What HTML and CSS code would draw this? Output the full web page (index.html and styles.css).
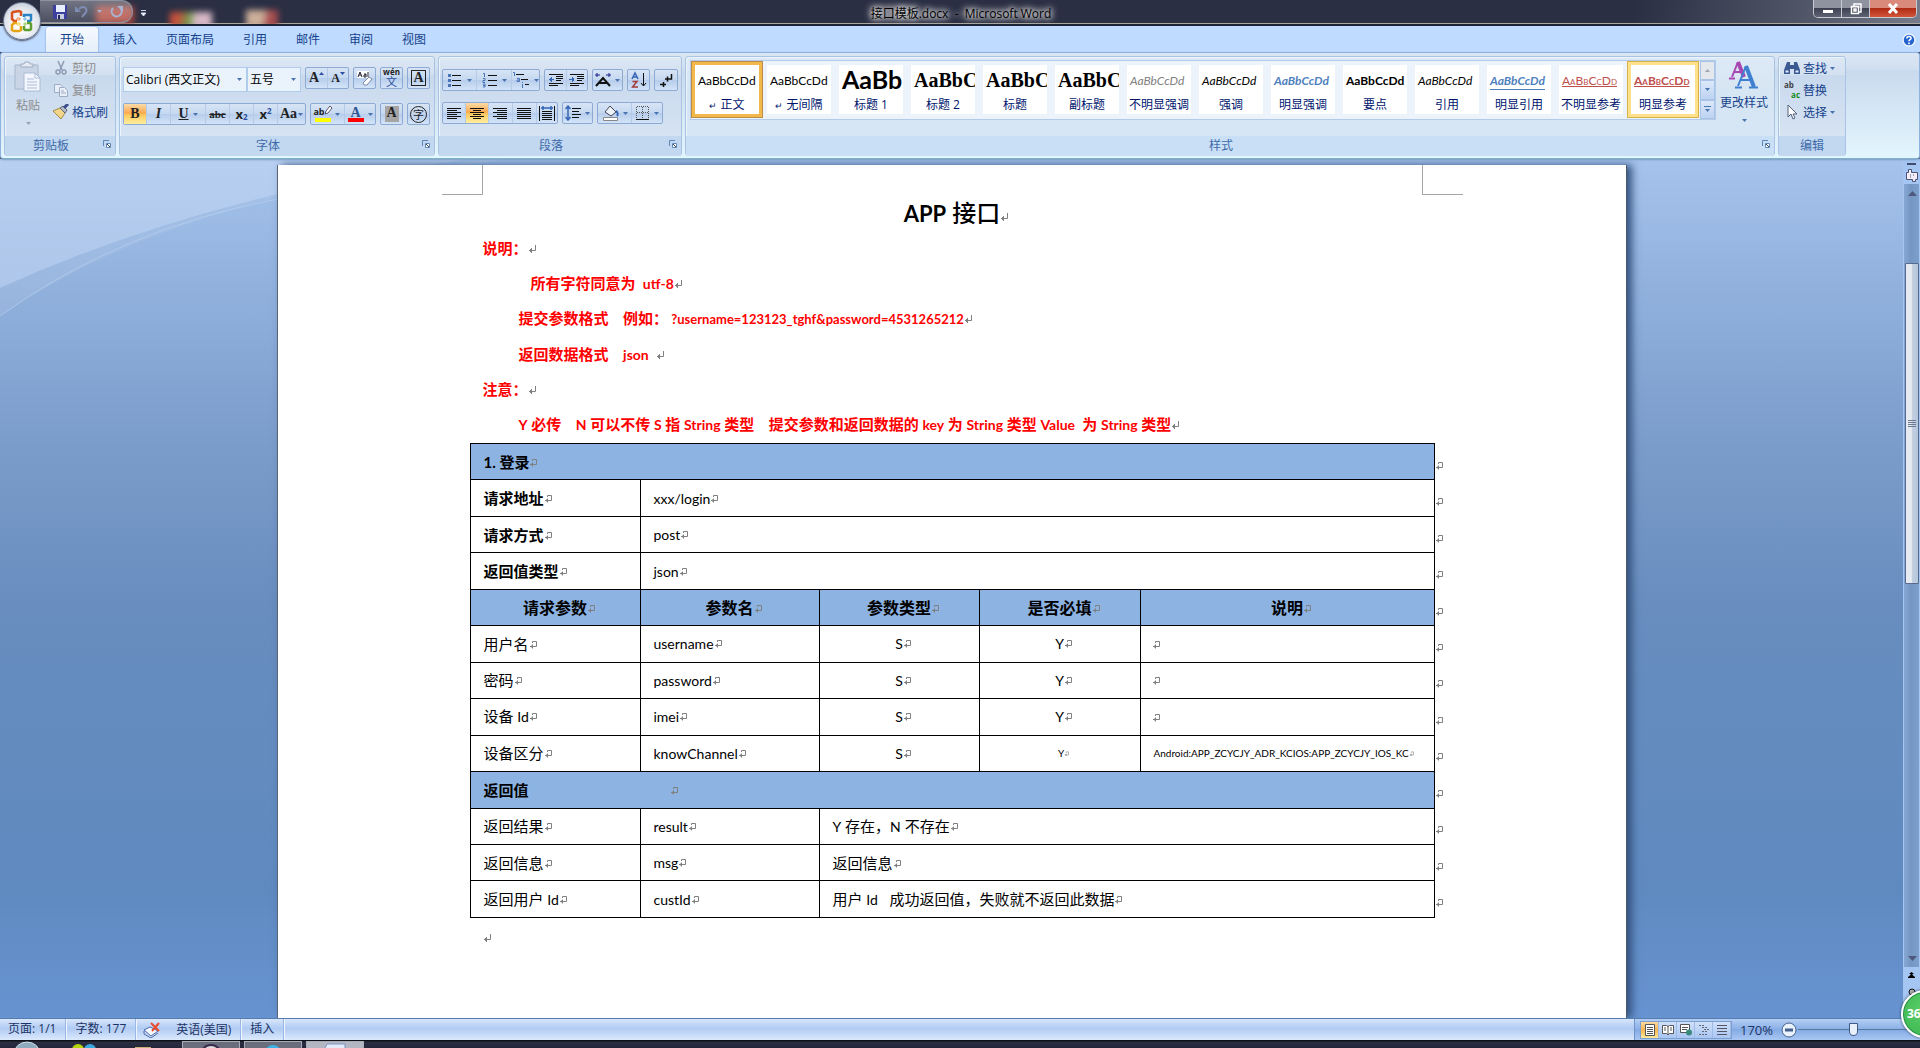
FILE: index.html
```html
<!DOCTYPE html>
<html lang="zh-CN">
<head>
<meta charset="utf-8">
<title>接口模板.docx - Microsoft Word</title>
<link rel="stylesheet" href="styles.css">
</head>
<body>
<svg class="defs" aria-hidden="true">
  <symbol id="para" viewBox="0 0 8 10"><path d="M7.5 1v5.5H1M3.5 4v5M2.500 5v3" fill="none" stroke="#808080"/></symbol>
  <symbol id="cell" viewBox="0 0 8 10"><path d="M3.500 3V1.500H7.500V6.500H1M3.500 4.500v4M2.500 5.500v2" fill="none" stroke="#808080"/></symbol>
  <symbol id="down" viewBox="0 0 5 3"><path d="M0 0h5L2.500 3z" fill="currentColor"/></symbol>
  <symbol id="launch" viewBox="0 0 8 8"><path d="M.5 6V.5H6" fill="none" stroke="#5f86b8"/><path d="M3.500 3.500h4v4h-4z" fill="#fff" stroke="#5f86b8"/><path d="M4 4l3 3" stroke="#345"/></symbol>
</svg>

<div class="app">
  <header class="titlebar">
    <span class="glow glow-a"></span><span class="glow glow-b"></span><span class="glow glow-c"></span>
    <div class="quick">
      <button class="plain" aria-label="保存"><svg width="14" height="14" viewBox="0 0 14 14"><path d="M0 0h14v14H1L0 13z" fill="#3b3fa0"/><path d="M3 0h9v7H3z" fill="#e8eefc"/><path d="M4 9h7v5H4z" fill="#c9cde0"/><path d="M5 10h2v4H5z" fill="#23265e"/></svg></button>
      <button class="plain" aria-label="撤消"><svg width="14" height="14" viewBox="0 0 14 14"><path d="M4 4C8 0 13 3 11 7c-1 2-3 3-4 5" fill="none" stroke="#7f8db3" stroke-width="2"/><path d="M0 1v6h6z" fill="#7f8db3"/></svg></button>
      <svg class="qarrow" width="5" height="3"><use href="#down"/></svg>
      <button class="plain redo" aria-label="重复"><svg width="14" height="14" viewBox="0 0 14 14"><path d="M3 3a5 5 0 1 0 8 1" fill="none" stroke="#a9b4d2" stroke-width="2"/><path d="M7 1h6v6z" fill="#a9b4d2"/></svg></button>
    </div>
    <button class="plain more" aria-label="自定义快速访问工具栏"><svg width="7" height="7" viewBox="0 0 7 7"><path d="M1 .5h5M1 3l2.500 3L6 3z" fill="#fff" stroke="#cdd9ee"/></svg></button>
    <h1 class="caption">接口模板.docx&nbsp; -&nbsp; Microsoft Word</h1>
    <div class="winbtns">
      <button aria-label="最小化"><svg width="12" height="10"><path d="M1 6h10v3H1z" fill="#fff"/></svg></button>
      <button aria-label="还原"><svg width="12" height="12" viewBox="0 0 12 12"><path d="M4 3V1h7v8H9M1.500 3.500h7v7h-7zM4 6h2v2H4z" fill="none" stroke="#fff" stroke-width="1.500"/></svg></button>
      <button class="close" aria-label="关闭"><svg width="12" height="11" viewBox="0 0 12 11"><path d="M2 1l8 9M10 1L2 10" stroke="#fff" stroke-width="3"/></svg></button>
    </div>
  </header>

  <button class="office" aria-label="Office 按钮"><svg width="24" height="24" viewBox="0 0 24 24" fill="none" stroke-width="2.500"><path d="M11 7V3L9 2 3 3 2 4v6l2 2h3" stroke="#d9531e"/><path d="M14 8V6h7v5l-1 1h-3" stroke="#2b83c6"/><path d="M7 14H4l-2 2v5l2 1h5l2-1v-4" stroke="#e5a512"/><path d="M17 14h3l1 1v5l-1 1h-5l-1-1v-3" stroke="#5e9e2e"/><path d="M7 9h3v2H7z" stroke="#f08a4a" stroke-width="1"/><path d="M14 9h2v2h-2z" stroke="#6fb3e6" stroke-width="1"/><path d="M7 14h3v2H7z" stroke="#f6c94a" stroke-width="1"/><path d="M14 14h2v2h-2z" stroke="#93c85a" stroke-width="1"/></svg></button>

  <nav class="tabs">
    <button class="tab on">开始</button><button class="tab">插入</button><button class="tab">页面布局</button><button class="tab">引用</button><button class="tab">邮件</button><button class="tab">审阅</button><button class="tab">视图</button>
    <button class="plain help" aria-label="帮助"><svg width="14" height="14" viewBox="0 0 14 14"><circle cx="7" cy="7" r="6" fill="#2563cf" stroke="#e9f2ff" stroke-width="1.500"/><path d="M4.800 5.500C5 2.500 9.500 3 9 5.500 8.700 6.800 7 6.600 7 8.300M7 9.500v1.800" fill="none" stroke="#fff" stroke-width="1.600"/></svg></button>
  </nav>

  <section class="ribbon">
    <div class="group clip">
      <div class="body">
        <button class="paste dim"><svg width="28" height="32" viewBox="0 0 28 32"><path d="M1 4h23v24H1z" fill="#c9d5e6" stroke="#a8b7cc"/><path d="M7 6V3h3l1-2h4l1 2h3v3z" fill="#e6ebf3" stroke="#9fabc0"/><path d="M10 12h11l5 5v13H10z" fill="#f3f7fd" stroke="#a9bbd6"/><path d="M21 12v5h5M13 18h7M13 21h10M13 24h10M13 27h10" fill="none" stroke="#a9bbd6"/></svg><span>粘贴</span><svg width="5" height="3"><use href="#down"/></svg></button>
        <div class="stack">
          <button class="line dim"><svg width="16" height="16" viewBox="0 0 16 16" fill="none" stroke="#8d9bb3" stroke-width="1.500"><path d="M5 1l4 9M11 1l-4 9"/><circle cx="5" cy="12" r="2"/><circle cx="11" cy="12" r="2"/></svg>剪切</button>
          <button class="line dim"><svg width="16" height="16" viewBox="0 0 16 16" fill="#e9eff8" stroke="#9dabc4"><path d="M1.500 2.500h6l2 2v6h-8z"/><path d="M6.500 5.500h5l3 3v6h-8zM8 9h3M8 11h5"/></svg>复制</button>
          <button class="line"><svg width="16" height="16" viewBox="0 0 16 16"><path d="M0 7l7-3 5 5-4 6z" fill="#f0d58a" stroke="#a48b46"/><path d="M7 4l3-2 4 4-2 3z" fill="#b9bfca" stroke="#5b6577"/><path d="M11 4l4-4" stroke="#3c4e8a" stroke-width="3"/></svg>格式刷</button>
        </div>
      </div>
      <div class="name">剪贴板<svg class="launch" width="8" height="8"><use href="#launch"/></svg></div>
    </div>

    <div class="group font">
      <div class="body rows">
        <div class="row tall">
          <div class="combos"><select class="face" aria-label="字体"><option>Calibri (西文正文)</option></select><select class="size" aria-label="字号"><option>五号</option></select></div>
          <div class="set"><button class="w21 serif" aria-label="增大字体">A<svg class="tip" width="5" height="3" viewBox="0 0 5 3"><path d="M0 3h5L2.500 0z" fill="#2b4ea0"/></svg></button><button class="w21 serif small" aria-label="缩小字体">A<svg class="tip" width="5" height="3" viewBox="0 0 5 3"><path d="M0 0h5L2.500 3z" fill="#2b4ea0"/></svg></button></div>
          <div class="set"><button class="w21" aria-label="清除格式"><svg width="16" height="16" viewBox="0 0 16 16"><path d="M0 1h12v7H0z" fill="#fff"/><path d="M1 7l2-5 2 5M2 5h2M7 4h2v3H7V5h2M11 7V2" fill="none" stroke="#223"/><path d="M6 13l6-6 3 2-5 6H7z" fill="#fff" stroke="#7b8aa8"/></svg></button></div>
          <div class="set"><button class="w21 wen" aria-label="拼音指南"><small>wén</small><span>文</span></button></div>
          <div class="set"><button class="w21" aria-label="字符边框"><span class="boxed serif">A</span></button></div>
        </div>
        <div class="row">
          <div class="set">
            <button class="w22 on serif"><b>B</b></button><button class="w24 serif"><i>I</i></button><button class="w35 serif"><u>U</u><svg width="5" height="3"><use href="#down"/></svg></button><button class="w24 serif tiny"><s>abc</s></button><button class="w24 sans">x<sub>2</sub></button><button class="w24 sans">x<sup>2</sup></button><button class="w28 serif">Aa<svg width="5" height="3"><use href="#down"/></svg></button>
          </div>
          <div class="set"><button class="w33" aria-label="突出显示"><span class="bar yellow">ab<svg width="9" height="9" viewBox="0 0 9 9"><path d="M1 8l1-3 4-5 2 2-4 5z" fill="#fff" stroke="#556"/></svg></span><svg width="5" height="3"><use href="#down"/></svg></button><button class="w31" aria-label="字体颜色"><span class="bar red serif">A</span><svg width="5" height="3"><use href="#down"/></svg></button></div>
          <div class="set"><button class="w21" aria-label="字符底纹"><span class="shade serif">A</span></button></div>
          <div class="set"><button class="w21" aria-label="带圈字符"><span class="ring">字</span></button></div>
        </div>
      </div>
      <div class="name">字体<svg class="launch" width="8" height="8"><use href="#launch"/></svg></div>
    </div>

    <div class="group par">
      <div class="body rows low">
        <div class="row">
          <div class="set">
            <button class="w33" aria-label="项目符号"><svg width="16" height="16" viewBox="0 0 16 16"><path d="M5 3.500h9M5 8.500h9M5 13.500h9" stroke="#111"/><path d="M1 2h3v3H1zM1 7h3v3H1zM1 12h3v3H1z" fill="#4a74b8"/></svg><svg width="5" height="3"><use href="#down"/></svg></button>
            <button class="w35" aria-label="编号"><svg width="16" height="16" viewBox="0 0 16 16"><path d="M6 3.500h9M6 8.500h9M6 13.500h9" stroke="#111"/><path d="M1 1.500h1.500V5M1 6.500h2v2H1v2h2M1 12h2v3H1M1 13.500h2" fill="none" stroke="#4a74b8"/></svg><svg width="5" height="3"><use href="#down"/></svg></button>
            <button class="w28" aria-label="多级列表"><svg width="18" height="16" viewBox="0 0 18 16"><path d="M4 2.500h8M9 7.500h7M13 12.500h4" stroke="#111"/><path d="M1 .5h1.500V4M5 6.500h2.500v3H5V8h2M10.500 12v4M10 10.500h1" fill="none" stroke="#4a74b8"/></svg><svg width="5" height="3"><use href="#down"/></svg></button>
          </div>
          <div class="set">
            <button class="w21" aria-label="减少缩进"><svg width="16" height="16" viewBox="0 0 16 16"><path d="M1 2.500h14M8 4.500h7M8 6.500h7M8 8.500h5M1 11.500h14M1 13.500h9" stroke="#111"/><path d="M6 7.500H1M3.500 5v5M2.500 6v3" stroke="#3565b5"/></svg></button>
            <button class="w21" aria-label="增加缩进"><svg width="16" height="16" viewBox="0 0 16 16"><path d="M1 2.500h14M8 4.500h7M8 6.500h7M8 8.500h5M1 11.500h14M1 13.500h9" stroke="#111"/><path d="M0 7.500h5M3.500 5v5M4.500 6v3" stroke="#3565b5"/></svg></button>
          </div>
          <div class="set"><button class="w29" aria-label="中文版式"><svg width="16" height="16" viewBox="0 0 16 16"><path d="M1 14L8 6l7 8M4.500 11h7" fill="none" stroke="#111" stroke-width="2"/><path d="M0 3h5M2 1v4M11 3h5M14 1v4" stroke="#1c1f86"/></svg><svg width="5" height="3"><use href="#down"/></svg></button></div>
          <div class="set"><button class="w21" aria-label="排序"><svg width="16" height="18" viewBox="0 0 16 18"><path d="M1 8l3-6 3 6M2 6h4" fill="none" stroke="#3565b5" stroke-width="1.500"/><path d="M1.500 10.500H6L1.500 16H7" fill="none" stroke="#a23a3a" stroke-width="1.500"/><path d="M12.500 2v13M10 12l2.500 3 2.500-3" fill="none" stroke="#111"/></svg></button></div>
          <div class="set"><button class="w22" aria-label="显示编辑标记"><svg width="14" height="16" viewBox="0 0 14 16"><path d="M12.500 2v5H6M8.500 4.500v5M1 12.500h6M4.500 10v5" fill="none" stroke="#111" stroke-width="1.500"/></svg></button></div>
        </div>
        <div class="row">
          <div class="set">
            <button class="w22" aria-label="左对齐"><svg width="15" height="13"><path d="M0 1.500h14M0 3.500h10M0 5.500h14M0 7.500h10M0 9.500h14M0 11.500h10" stroke="#111"/></svg></button>
            <button class="w23 on" aria-label="居中"><svg width="15" height="13"><path d="M0 1.500h14M3 3.500h8M0 5.500h14M3 7.500h8M0 9.500h14M3 11.500h8" stroke="#111"/></svg></button>
            <button class="w24" aria-label="右对齐"><svg width="15" height="13"><path d="M0 1.500h14M4 3.500h10M0 5.500h14M4 7.500h10M0 9.500h14M4 11.500h10" stroke="#111"/></svg></button>
            <button class="w24" aria-label="两端对齐"><svg width="15" height="13"><path d="M0 1.500h14M0 3.500h14M0 5.500h14M0 7.500h14M0 9.500h14M0 11.500h14" stroke="#111"/></svg></button>
            <button class="w21" aria-label="分散对齐"><svg width="16" height="16"><path d="M.5 1v15M15.500 1v15M3 6.500h10M3 8.500h10M3 10.500h10M3 12.500h10M3 14.500h10" stroke="#111"/><path d="M2 3h12M4 1v4M12 1v4" stroke="#3565b5" stroke-width="1.500"/></svg></button>
          </div>
          <div class="set"><button class="w29" aria-label="行距"><svg width="16" height="16"><path d="M7 3.500h9M7 6.500h7M7 9.500h9M7 12.500h7" stroke="#111"/><path d="M3 1v14M.5 4L3 1l2.500 3M.5 12L3 15l2.500-3" fill="none" stroke="#3565b5" stroke-width="1.500"/></svg><svg width="5" height="3"><use href="#down"/></svg></button></div>
          <div class="set">
            <button class="w33" aria-label="底纹"><svg width="17" height="16" viewBox="0 0 17 16"><path d="M8 1l6 6-5 4-6-4z" fill="#eef3fa" stroke="#445"/><path d="M14 6c2 1 2 4 1 5" stroke="#3565b5" stroke-width="2" fill="none"/><path d="M1.500 12.500h14v3h-14z" fill="#fff" stroke="#888"/></svg><svg width="5" height="3"><use href="#down"/></svg></button>
            <button class="w31" aria-label="边框"><svg width="14" height="14"><path d="M1 .5h12M1 6.500h12M.5 1v12M6.500 1v12M12.500 1v12" stroke="#555" stroke-dasharray="1 1"/><path d="M0 13.500h13" stroke="#111"/></svg><svg width="5" height="3"><use href="#down"/></svg></button>
          </div>
        </div>
      </div>
      <div class="name">段落<svg class="launch" width="8" height="8"><use href="#launch"/></svg></div>
    </div>

    <div class="group styles">
      <div class="body">
        <div class="gallery">
          <button class="style picked"><span class="pv">AaBbCcDd</span><span class="st"><small>↵</small> 正文</span></button>
          <button class="style"><span class="pv">AaBbCcDd</span><span class="st"><small>↵</small> 无间隔</span></button>
          <button class="style"><span class="pv h1">AaBb</span><span class="st">标题 1</span></button>
          <button class="style"><span class="pv h2">AaBbC</span><span class="st">标题 2</span></button>
          <button class="style"><span class="pv h2">AaBbC</span><span class="st">标题</span></button>
          <button class="style"><span class="pv h2">AaBbC</span><span class="st">副标题</span></button>
          <button class="style"><span class="pv it gray">AaBbCcDd</span><span class="st">不明显强调</span></button>
          <button class="style"><span class="pv it">AaBbCcDd</span><span class="st">强调</span></button>
          <button class="style"><span class="pv it bold blue">AaBbCcDd</span><span class="st">明显强调</span></button>
          <button class="style"><span class="pv bold">AaBbCcDd</span><span class="st">要点</span></button>
          <button class="style"><span class="pv it">AaBbCcDd</span><span class="st">引用</span></button>
          <button class="style"><span class="pv it bold blue"><span class="rule">AaBbCcDd</span></span><span class="st">明显引用</span></button>
          <button class="style"><span class="pv caps"><u>AaBbCcDd</u></span><span class="st">不明显参考</span></button>
          <button class="style hot"><span class="pv caps bold"><u>AaBbCcDd</u></span><span class="st">明显参考</span></button>
          <div class="scroller"><button class="off" aria-label="上一行"><svg width="5" height="3" viewBox="0 0 5 3"><path d="M0 3h5L2.500 0z" fill="#a0a6b0"/></svg></button><button aria-label="下一行"><svg width="5" height="3"><use href="#down"/></svg></button><button aria-label="其他"><svg width="7" height="7" viewBox="0 0 7 7"><path d="M0 .5h7" stroke="#4a74b0"/><path d="M1 3h5L3.500 6z" fill="#4a74b0"/></svg></button></div>
        </div>
        <button class="change"><svg width="30" height="30" viewBox="0 0 30 30" fill="none"><path d="M3 17L9 2" stroke="#a846b4" stroke-width="2"/><path d="M9 2l6 15" stroke="#a846b4" stroke-width="4"/><path d="M5 12h8M0 18.500h6" stroke="#a846b4" stroke-width="2"/><path d="M9 26L17 6" stroke="#3f7fd0" stroke-width="2"/><path d="M17 6l8 21" stroke="#3f7fd0" stroke-width="4"/><path d="M12 20h10M6 27.500h7M20 27.500h9" stroke="#3f7fd0" stroke-width="2"/></svg><span>更改样式</span><svg width="5" height="3"><use href="#down"/></svg></button>
      </div>
      <div class="name">样式<svg class="launch" width="8" height="8"><use href="#launch"/></svg></div>
    </div>

    <div class="group edit">
      <div class="body">
        <div class="stack">
          <button class="line"><svg width="16" height="16" viewBox="0 0 16 16"><path d="M3 2h3v3h4V2h3l3 8v4h-6V9H6v5H0v-4z" fill="#3c5a92"/><path d="M1.500 10.500h3v2h-3zM11.500 10.500h3v2h-3z" fill="#dfe9f8"/></svg>查找<svg width="5" height="3"><use href="#down"/></svg></button>
          <button class="line"><span class="abac"><i>ab</i><em>ac</em></span>替换</button>
          <button class="line"><svg width="16" height="16" viewBox="0 0 16 16"><path d="M4 1v12l3-3 2 5 2-1-2-4h4z" fill="#fff" stroke="#52607c"/></svg>选择<svg width="5" height="3"><use href="#down"/></svg></button>
        </div>
      </div>
      <div class="name whole">编辑</div>
    </div>
  </section>

  <main class="work">
    <svg class="swoosh" width="560" height="170" viewBox="0 0 560 170" aria-hidden="true">
      <path d="M0 0H470Q210 34 0 129z" fill="#c9dcf5" fill-opacity=".5"/>
      <path d="M0 129Q210 34 470 0H500Q180 34 0 157z" fill="#b4cfe9" fill-opacity=".22"/>
      <path d="M0 157Q120 70 278 40 390 14 500 0" fill="none" stroke="#c4d8f0" stroke-opacity=".5"/>
    </svg>
    <div class="canvas">
      <article class="page">
        <div class="corners"><span class="corner"></span><span class="corner far"></span></div>
        <h2><span class="en">APP</span> 接口<svg class="mk"><use href="#para"/></svg></h2>
        <p>说明：<svg class="mk"><use href="#para"/></svg></p>
        <p class="in4">所有字符同意为&nbsp; <span class="en">utf-8</span><svg class="mk"><use href="#para"/></svg></p>
        <p class="in3">提交参数格式&nbsp;&nbsp;&nbsp; 例如：<span class="en url">&nbsp;?username=123123_tghf&amp;password=4531265212</span><svg class="mk"><use href="#para"/></svg></p>
        <p class="in3">返回数据格式&nbsp;&nbsp;&nbsp; <span class="en">json</span>&nbsp; <svg class="mk"><use href="#para"/></svg></p>
        <p>注意：<svg class="mk"><use href="#para"/></svg></p>
        <p class="in3"><span class="en">Y</span> 必传&nbsp;&nbsp;&nbsp; <span class="en">N</span> 可以不传 <span class="en">S</span> 指 <span class="en">String</span> 类型&nbsp;&nbsp;&nbsp; 提交参数和返回数据的 <span class="en">key</span> 为 <span class="en">String</span> 类型 <span class="en">Value</span>&nbsp; 为 <span class="en">String</span> 类型<svg class="mk"><use href="#para"/></svg></p>
        <table>
          <colgroup><col class="c1"><col class="c2"><col class="c3"><col class="c4"><col class="c5"><col class="c6"></colgroup>
          <tr class="band"><th colspan="5" class="first">1. 登录<svg class="mk"><use href="#cell"/></svg></th><td class="end"><svg class="mk"><use href="#cell"/></svg></td></tr>
          <tr><th>请求地址<svg class="mk"><use href="#cell"/></svg></th><td colspan="4"><span class="en">xxx/login</span><svg class="mk"><use href="#cell"/></svg></td><td class="end"><svg class="mk"><use href="#cell"/></svg></td></tr>
          <tr><th>请求方式<svg class="mk"><use href="#cell"/></svg></th><td colspan="4"><span class="en">post</span><svg class="mk"><use href="#cell"/></svg></td><td class="end"><svg class="mk"><use href="#cell"/></svg></td></tr>
          <tr><th>返回值类型<svg class="mk"><use href="#cell"/></svg></th><td colspan="4"><span class="en">json</span><svg class="mk"><use href="#cell"/></svg></td><td class="end"><svg class="mk"><use href="#cell"/></svg></td></tr>
          <tr class="band mid"><th>请求参数<svg class="mk"><use href="#cell"/></svg></th><th>参数名<svg class="mk"><use href="#cell"/></svg></th><th>参数类型<svg class="mk"><use href="#cell"/></svg></th><th>是否必填<svg class="mk"><use href="#cell"/></svg></th><th>说明<svg class="mk"><use href="#cell"/></svg></th><td class="end"><svg class="mk"><use href="#cell"/></svg></td></tr>
          <tr><td>用户名<svg class="mk"><use href="#cell"/></svg></td><td><span class="en">username</span><svg class="mk"><use href="#cell"/></svg></td><td class="ctr"><span class="en">S</span><svg class="mk"><use href="#cell"/></svg></td><td class="ctr"><span class="en">Y</span><svg class="mk"><use href="#cell"/></svg></td><td><svg class="mk alone"><use href="#cell"/></svg></td><td class="end"><svg class="mk"><use href="#cell"/></svg></td></tr>
          <tr><td>密码<svg class="mk"><use href="#cell"/></svg></td><td><span class="en">password</span><svg class="mk"><use href="#cell"/></svg></td><td class="ctr"><span class="en">S</span><svg class="mk"><use href="#cell"/></svg></td><td class="ctr"><span class="en">Y</span><svg class="mk"><use href="#cell"/></svg></td><td><svg class="mk alone"><use href="#cell"/></svg></td><td class="end"><svg class="mk"><use href="#cell"/></svg></td></tr>
          <tr><td>设备 <span class="en">Id</span><svg class="mk"><use href="#cell"/></svg></td><td><span class="en">imei</span><svg class="mk"><use href="#cell"/></svg></td><td class="ctr"><span class="en">S</span><svg class="mk"><use href="#cell"/></svg></td><td class="ctr"><span class="en">Y</span><svg class="mk"><use href="#cell"/></svg></td><td><svg class="mk alone"><use href="#cell"/></svg></td><td class="end"><svg class="mk"><use href="#cell"/></svg></td></tr>
          <tr><td>设备区分<svg class="mk"><use href="#cell"/></svg></td><td><span class="en">knowChannel</span><svg class="mk"><use href="#cell"/></svg></td><td class="ctr"><span class="en">S</span><svg class="mk"><use href="#cell"/></svg></td><td class="ctr fine">Y<svg class="mk"><use href="#cell"/></svg></td><td class="fine">Android:APP_ZCYCJY_ADR_KCIOS:APP_ZCYCJY_IOS_KC<svg class="mk"><use href="#cell"/></svg></td><td class="end"><svg class="mk"><use href="#cell"/></svg></td></tr>
          <tr class="band"><th colspan="5" class="first">返回值<span class="tabstop"></span><svg class="mk"><use href="#cell"/></svg></th><td class="end"><svg class="mk"><use href="#cell"/></svg></td></tr>
          <tr><td>返回结果<svg class="mk"><use href="#cell"/></svg></td><td><span class="en">result</span><svg class="mk"><use href="#cell"/></svg></td><td colspan="3"><span class="en">Y</span> 存在，<span class="en">N</span> 不存在<svg class="mk"><use href="#cell"/></svg></td><td class="end"><svg class="mk"><use href="#cell"/></svg></td></tr>
          <tr><td>返回信息<svg class="mk"><use href="#cell"/></svg></td><td><span class="en">msg</span><svg class="mk"><use href="#cell"/></svg></td><td colspan="3">返回信息<svg class="mk"><use href="#cell"/></svg></td><td class="end"><svg class="mk"><use href="#cell"/></svg></td></tr>
          <tr><td>返回用户 <span class="en">Id</span><svg class="mk"><use href="#cell"/></svg></td><td><span class="en">custId</span><svg class="mk"><use href="#cell"/></svg></td><td colspan="3">用户 <span class="en">Id</span>&nbsp;&nbsp; 成功返回值，失败就不返回此数据<svg class="mk"><use href="#cell"/></svg></td><td class="end"><svg class="mk"><use href="#cell"/></svg></td></tr>
        </table>
        <p class="last"><svg class="mk"><use href="#para"/></svg></p>
      </article>
    </div>
    <aside class="vbar">
      <span class="split"></span>
      <button class="plain" aria-label="标尺"><svg width="12" height="13" viewBox="0 0 12 13"><path d="M.5 3.500h2v-3h3v3h6v7h-2v2h-3v-2h-6z" fill="#f4eef8" stroke="#4c5374"/><path d="M4 6h1M7 6h1M4 8h1" stroke="#4c5374"/></svg></button>
      <div class="track">
        <svg class="up" width="9" height="5" viewBox="0 0 9 5"><path d="M0 5h9L4.500 0z" fill="#4d5779"/></svg>
        <div class="thumb"><i></i></div>
        <svg class="dn" width="9" height="5" viewBox="0 0 9 5"><path d="M0 0h9L4.500 5z" fill="#4d5779"/></svg>
      </div>
      <div class="browse">
        <button class="plain" aria-label="上一页"><svg width="7" height="7" viewBox="0 0 7 7"><path d="M3.500 0L6 2H4.500v1L7 5v1H0V5l2.500-2V2H1z" fill="#000"/></svg></button>
        <button class="plain" aria-label="选择浏览对象"><svg width="8" height="8"><circle cx="4" cy="4" r="3" fill="#aaa" stroke="#111"/></svg></button>
      </div>
    </aside>
    <div class="ball">36</div>
  </main>

  <footer class="status">
    <span class="cellbox first">页面: 1/1</span><span class="cellbox">字数: 177</span>
    <span class="cellbox lang"><svg width="18" height="16" viewBox="0 0 18 16"><path d="M1 8l6-3 8 4-7 5z" fill="#f5f8ff" stroke="#4c67a8"/><path d="M1 9v3l7 4 7-5" fill="none" stroke="#4c67a8"/><path d="M8 1l8 8M16 1L9 9" stroke="#ea4a2a" stroke-width="2"/></svg>英语(美国)</span>
    <span class="cellbox">插入</span>
    <div class="right">
      <div class="views">
        <button class="on" aria-label="页面视图"><svg width="12" height="12"><path d="M1.500 .5h9v11h-9z" fill="#fff" stroke="#555"/><path d="M3 3.500h6M3 5.500h6M3 7.500h6M3 9.500h6" stroke="#555"/></svg></button>
        <button aria-label="阅读版式"><svg width="12" height="12"><path d="M.5 1.500h4l1.500 1 1.500-1h4v8h-4L6 11 4.500 9.500h-4z" fill="#fff" stroke="#555"/><path d="M6 2v8M2 4h2M2 6h2M8 4h2M8 6h2" stroke="#555"/></svg></button>
        <button aria-label="Web 版式"><svg width="12" height="12"><path d="M.5 .5h9v8h-9z" fill="#fff" stroke="#555"/><path d="M2 3.500h6M2 5.500h5" stroke="#555"/><circle cx="9" cy="8.500" r="3" fill="#3a8a7c"/></svg></button>
        <button aria-label="大纲视图"><svg width="12" height="12"><path d="M1 1.500h6M4 3.500h6M6 5.500h5M4 7.500h6M1 10.500h9" stroke="#667" stroke-dasharray="2 1"/></svg></button>
        <button aria-label="普通视图"><svg width="12" height="12"><path d="M1 1.500h10M1 4.500h10M1 7.500h10M1 10.500h10" stroke="#556"/></svg></button>
      </div>
      <span class="pct">170%</span>
      <button class="plain" aria-label="缩小"><svg width="16" height="16"><circle cx="8" cy="8" r="7" fill="#e9f1fc" stroke="#46618f"/><path d="M4 8h8" stroke="#46618f" stroke-width="3"/></svg></button>
      <input class="zoom" type="range" min="10" max="330" value="170" aria-label="显示比例">
    </div>
  </footer>

  <div class="taskbar">
    <svg width="28" height="7"><ellipse cx="14" cy="13" rx="13" ry="12" fill="#8fa9bd" stroke="#cfe0ea"/></svg>
    <svg class="qq" width="26" height="7"><circle cx="7" cy="9" r="6" fill="#b7d50c"/><circle cx="19" cy="9" r="6" fill="#3aa9e0"/></svg>
    <svg class="fold" width="16" height="7"><path d="M0 7h16v-1H0z" fill="#c9ae74"/></svg>
    <button aria-label="浏览器"><svg width="24" height="7"><circle cx="12" cy="13" r="10" fill="#ddd" stroke="#3b2a4c" stroke-width="2"/></svg></button>
    <button aria-label="应用"><svg width="24" height="7"><circle cx="12" cy="11" r="8" fill="#3cb2e6"/></svg></button>
    <button class="live" aria-label="Word"><svg width="24" height="7"><path d="M4 2h18v6H1z" fill="#e4ecf9" stroke="#7c93c2"/></svg></button>
  </div>
</div>
</body>
</html>
```

FILE: styles.css
```css
* { box-sizing: border-box; }

body {
  margin: 0;
  background: #23263a;
  font-family: "Open Sans", "Noto Sans CJK SC", sans-serif;
  font-size: 12px;
  color: #15428b;
}

button {
  margin: 0;
  padding: 0;
  border: 0;
  background: none;
  font: inherit;
  color: inherit;
}

svg { flex: none; }
.defs { display: none; }
.plain { display: flex; align-items: center; justify-content: center; }

.app {
  position: relative;
  display: flex;
  flex-direction: column;
  height: 100vh;
  overflow: hidden;
}

/* Title bar */
.titlebar {
  position: relative;
  display: flex;
  align-items: flex-start;
  height: 26px;
  flex: none;
  padding-left: 40px;
  overflow: hidden;
  background: linear-gradient(100deg, #2b2f44 85%, #555b6c 95%, #777c8c);
  border-bottom: 2px solid #1b2435;
  box-shadow: inset 0 -1px #aaa79f;
}
.glow { position: absolute; filter: blur(3px); }
.glow-a { left: 96px; top: 6px; width: 38px; height: 18px; background: #b0493d; }
.glow-b { left: 170px; top: 12px; width: 42px; height: 16px; background: linear-gradient(100deg, #c8503c 20%, #6f9a4a 45%, #d9b9c6 60%); }
.glow-c { left: 246px; top: 10px; width: 32px; height: 18px; background: linear-gradient(100deg, #cdb09a 50%, #a54b4d 70%); }
.quick {
  position: relative;
  display: flex;
  align-items: center;
  gap: 8px;
  width: 93px;
  height: 23px;
  padding-left: 13px;
  border: 1px solid #8f93a0;
  border-left: 0;
  border-radius: 0 12px 12px 0;
  background: linear-gradient(#ffffff55, #ffffff28);
}
.qarrow { color: #a9b4d2; }
.more { width: 20px; height: 26px; }
.caption {
  position: absolute;
  inset: 0 0 2px;
  margin: 0;
  line-height: 28px;
  padding-left: 2px;
  text-align: center;
  font-size: 12px;
  font-weight: 400;
  color: #000;
  text-shadow: 0 0 5px #fff, 0 0 7px #ccc, 0 0 9px #ccc, 0 0 10px #aaa;
}
.winbtns {
  position: relative;
  display: flex;
  height: 18px;
  margin-left: auto;
  margin-right: 3px;
  border: 1px solid #c7cad2;
  border-top: 0;
  border-radius: 0 0 5px 5px;
  overflow: hidden;
}
.winbtns button {
  display: flex;
  align-items: center;
  justify-content: center;
  width: 28px;
  border-right: 1px solid #c7cad2;
  background: linear-gradient(#8f93a0 45%, #3d4152 50%, #5f6475);
}
.winbtns .close { width: 46px; border: 0; background: linear-gradient(#d98a7b 45%, #b02c14 50%, #d2553a); }

.office {
  position: absolute;
  left: 3px;
  top: 2px;
  z-index: 2;
  display: flex;
  align-items: center;
  justify-content: center;
  width: 38px;
  height: 38px;
  border: 1px solid #6b7894;
  border-radius: 50%;
  background: radial-gradient(circle at 50% 60%, #fff 20%, #dfe3ec 60%, #a9b3c8);
  box-shadow: 0 1px 2px #445;
}

/* Tabs */
.tabs {
  display: flex;
  flex: none;
  gap: 1px;
  height: 26px;
  padding: 1px 4px 0 46px;
  background: #bfdbff;
}
.tab {
  position: relative;
  z-index: 1;
  height: 26px;
  padding: 0 14px 2px;
  border-radius: 3px 3px 0 0;
}
.tab.on { background: linear-gradient(#f6faff, #e3edf9); box-shadow: 0 0 2px #5f8fd0; clip-path: inset(-3px -3px 0); }
.help { margin-left: auto; }

/* Ribbon */
.ribbon {
  position: relative;
  z-index: 1;
  display: flex;
  flex: none;
  gap: 3px;
  height: 107px;
  padding: 3px 2px 2px 3px;
  border: 1px solid #8fb1e0;
  border-bottom-color: #7fb3c9;
  border-radius: 3px;
  background: linear-gradient(#dbe6f4, #d0dff0 16%, #c9daee 17%, #dff0fb 85%, #e3f6fe);
  box-shadow: 0 1px 2px #7d9cc4;
}
.group {
  display: flex;
  flex-direction: column;
  height: 100px;
  border: 1px solid #a9c4e2;
  border-radius: 3px;
  background: linear-gradient(#dee8f5, #d2e0f0 18%, #c9d9ed 19%, #d9e6f4);
  box-shadow: inset 1px 1px #ebf3fc;
}
.clip { width: 112px; }
.font { width: 316px; }
.par { width: 244px; }
.styles { width: 1090px; background: linear-gradient(#dde9f6, #d6e5f3 40%, #d8e7f5); }
.edit { width: 68px; }
.body { display: flex; height: 79px; flex: none; overflow: hidden; }
.name {
  position: relative;
  flex: 1;
  padding-right: 18px;
  line-height: 20px;
  text-align: center;
  color: #3e6aaa;
  background: #c1d8f0;
}
.name.whole { padding-right: 0; }
.styles .name { background: #c8dff6; }
.launch { position: absolute; right: 4px; top: 4px; }
.paste {
  display: flex;
  flex-direction: column;
  align-items: center;
  width: 46px;
  padding-top: 4px;
}
.paste span { line-height: 26px; }
.paste svg:last-child { margin-top: 3px; }
.stack { display: flex; flex-direction: column; }
.line { display: flex; align-items: center; gap: 3px; height: 22px; }
.clip .stack { padding-left: 2px; }
.edit .stack { padding-left: 5px; }
.edit use { color: #4a74b0; }
.dim { color: #8d8d8d; }

.rows { flex-direction: column; gap: 11px; padding: 10px 3px 0; }
.low { padding-top: 12px; }
.row { display: flex; gap: 4px; height: 22px; }
.row.tall { height: 25px; }
.combos { display: flex; }
select {
  appearance: none;
  height: 25px;
  padding: 0 2px;
  border: 1px solid #b0cbec;
  border-radius: 0;
  font: inherit;
  color: #000;
  background: url("data:image/svg+xml,%3Csvg xmlns='http://www.w3.org/2000/svg' width='5' height='3'%3E%3Cpath d='M0 0h5L2.500 3z' fill='%234a74b0'/%3E%3C/svg%3E") no-repeat right 4px center #eaf2fb;
}
.face { width: 124px; }
.size { width: 54px; }
.set {
  display: flex;
  height: 22px;
  border: 1px solid #8daad4;
  border-radius: 2px;
  background: linear-gradient(#d7e4f5, #c5d8f0 50%, #b7cdec 52%, #d3e4f8);
}
.set button { display: flex; align-items: center; justify-content: center; gap: 4px; color: #222; }
.set button + button { border-left: 1px solid #b5cae6; }
.set button use { color: #4a74b0; }
.paste use { color: #9aa3b3; }
.set .on { background: linear-gradient(#fcdba8, #fba94e 45%, #fdc95f 55%, #ffef9f); }
.w21 { width: 21px; }
.w22 { width: 22px; }
.w23 { width: 23px; }
.w24 { width: 24px; }
.w28 { width: 28px; }
.w29 { width: 29px; }
.w31 { width: 31px; }
.w33 { width: 33px; }
.w35 { width: 35px; }
.set .serif, .serif { font-family: "Liberation Serif", serif; font-size: 14px; font-weight: 700; line-height: 14px; }
.set .w21.serif { gap: 0; }
.set .small { font-size: 12px; }
.tip { align-self: flex-start; margin-top: 4px; }
.set .tiny { font-size: 11px; }
.set .sans { font-weight: 700; gap: 0; font-size: 13px; line-height: 14px; }
.set sup, .set sub { font-size: 8px; line-height: 8px; color: #2b4ea0; }
.set sup { align-self: flex-start; margin-top: 3px; }
.set sub { align-self: flex-end; margin-bottom: 3px; }
.set .w28.serif { gap: 1px; }
.set .wen { flex-direction: column; gap: 0; }
.wen small { font-size: 8px; line-height: 8px; font-weight: 700; }
.wen span { font-size: 11px; line-height: 12px; color: #2b4ea0; }
.boxed { width: 15px; height: 16px; border: 1px solid #222; line-height: 15px; }
.shade { width: 14px; height: 16px; background: #a5a5a5; line-height: 16px; }
.ring { width: 17px; height: 17px; border: 1px solid #222; border-radius: 50%; font-size: 11px; line-height: 15px; }
.bar { display: flex; width: 16px; height: 16px; line-height: 11px; font-size: 9px; font-weight: 700; border-bottom: 4px solid; justify-content: center; }
.bar svg { margin-left: -1px; }
.yellow { border-color: #ffff00; }
.bar.red { border-color: #ff0000; }
.bar.serif { color: #2f5597; }

/* Style gallery */
.styles .body { padding: 3px 0 0 4px; }
.gallery {
  display: flex;
  height: 60px;
  border: 1px solid #b2cbe9;
  background: #ecf3fb;
}
.style {
  display: flex;
  flex-direction: column;
  width: 72px;
  height: 57px;
  padding: 0 4px;
}
.pv {
  display: block;
  width: 64px;
  height: 31px;
  margin-top: 4px;
  padding: 0 3px;
  overflow: hidden;
  background: #fff;
  color: #000;
  font-family: Lato, sans-serif;
  font-size: 12px;
  line-height: 31px;
  text-align: left;
  white-space: nowrap;
}
.st {
  display: block;
  width: 64px;
  height: 18px;
  background: #fff;
  color: #00156e;
  line-height: 17px;
  text-align: center;
  white-space: nowrap;
}
.st small { font-size: 9px; line-height: 9px; }
.h1 { font-size: 25px; font-weight: 700; line-height: 28px; }
.h2 { font-family: "Liberation Serif", serif; font-size: 20px; font-weight: 700; }
.it { font-style: italic; }
.bold { font-weight: 700; }
.gray { color: #808080; }
.blue { color: #4f81bd; }
.caps { color: #c0504d; font-variant: small-caps; }
.rule { display: inline-block; height: 25px; border-bottom: 1px solid #4f81bd; }
.picked { box-shadow: inset 0 0 0 1px #bd8c46, inset 0 0 0 4px #f3b84c; }
.hot { box-shadow: inset 0 0 0 1px #d9b14c, inset 0 0 0 4px #ffe18a; }
.scroller { display: flex; flex-direction: column; width: 15px; margin-left: 1px; }
.scroller button {
  display: flex;
  flex: 1;
  align-items: center;
  justify-content: center;
  border: 1px solid #a9c3e6;
  background: linear-gradient(#dbe8f9, #bdd3f2);
}
.scroller .off { background: #e4e7ec; }
.scroller use { color: #4a74b0; }
.change { display: flex; flex-direction: column; align-items: center; width: 56px; }
.change span { line-height: 26px; }
.change svg:last-child { margin-top: 3px; color: #4a74b0; }
.abac { display: flex; flex-direction: column; width: 16px; font-size: 8px; line-height: 10px; font-weight: 700; text-align: left; }
.abac i { font-style: normal; color: #444; }
.abac em { font-style: normal; color: #178a1b; text-align: right; }

/* Workspace */
.work {
  position: relative;
  display: flex;
  flex: 1;
  min-height: 0;
  background: linear-gradient(#a5c3ec, #8cacd9 19%, #7a9cca 34%, #688dbe 52%, #5f8ac0 85%, #6793d1);
}
.swoosh { position: absolute; left: 0; top: 0; }
.canvas { position: relative; flex: 1; display: flex; justify-content: center; padding-top: 6px; overflow: hidden; }
.page {
  width: 1350px;
  padding: 0 163px 0 164px;
  background: #fff;
  border-left: 1px solid #5a6474;
  border-right: 1px solid #4a586e;
  box-shadow: 5px 0 8px #33527f;
  color: #000;
  font-family: Lato, "Noto Sans CJK SC", sans-serif;
  font-size: 15px;
}
.corners { display: flex; justify-content: space-between; }
.corner { width: 41px; height: 30px; border: solid #a5a5a5; border-width: 0 1px 1px 0; }
.corner.far { border-width: 0 0 1px 1px; }
.page h2 { margin: 0; height: 36px; font-size: 24px; font-weight: 500; line-height: 35px; text-align: center; padding-left: 8px; }
.page h2 .en { font-size: 22px; font-weight: 700; }
.page p { margin: 0; padding-left: 41px; line-height: 35px; font-weight: 700; color: #f00; white-space: nowrap; }
.page .in4 { padding-left: 89px; }
.page .in3 { padding-left: 77px; }
.en { font-size: 14px; }
.page .url { font-size: 13px; }
.mk { width: 8px; height: 10px; }
.mk.alone { margin-left: -2px; }
.page .last { line-height: 38px; }

table { width: 980px; height: 475px; margin: 1px 0 0 28px; border-collapse: collapse; table-layout: fixed; }
.c1 { width: 170px; }
.c2 { width: 179px; }
.c3 { width: 160px; }
.c4 { width: 161px; }
.c5 { width: 294px; }
.c6 { width: 16px; }
th, td { padding: 0 0 0 13px; border: 1px solid #000; text-align: left; line-height: 24px; white-space: nowrap; }
th { font-size: 15px; }
.band th { background: #8db3e2; }
.mid th { font-size: 16px; }
.mid th, .ctr { text-align: center; padding: 0 0 0 8px; }
.end { padding: 6px 0 0; border-width: 0 0 0 1px; }
.fine { font-size: 10px; }
.fine .mk { width: 5px; height: 6px; }
.tabstop { display: inline-block; width: 141px; }

/* Vertical scroll bar */
.vbar {
  position: relative;
  display: flex;
  flex-direction: column;
  align-items: center;
  width: 17px;
  padding: 4px 1px 0;
  background: #a5c5f2;
}
.split { width: 9px; height: 2px; margin-bottom: 4px; background: #434c6e; }
.track {
  display: flex;
  flex: 1;
  flex-direction: column;
  align-items: center;
  width: 15px;
  margin-top: 2px;
  border-left: 1px solid #83a5d3;
  background: linear-gradient(90deg, #86a6d0, #7496c3 40%, #7d9fcb);
}
.up { margin-top: 7px; }
.dn { margin: auto 0 6px; }
.thumb {
  display: flex;
  align-items: center;
  justify-content: center;
  width: 14px;
  height: 41%;
  margin-top: 67px;
  border: 1px solid #58698f;
  border-radius: 1px;
  background: linear-gradient(90deg, #e6ebf2 45%, #c3d0e0 50%, #b5c7db);
}
.thumb i { width: 8px; height: 8px; background: repeating-linear-gradient(#6d7a92 0 1px, transparent 1px 2px); }
.browse { display: flex; flex-direction: column; gap: 9px; height: 51px; padding-top: 5px; }
.ball {
  position: absolute;
  right: -29px;
  bottom: -20px;
  z-index: 3;
  width: 48px;
  height: 48px;
  padding-left: 4px;
  border: 2px solid #fff;
  border-radius: 50%;
  background: radial-gradient(circle at 50% 40%, #5ccf6c, #38b54c);
  box-shadow: 0 0 3px #345, inset 0 0 0 1px #2d8a4e;
  color: #fff;
  font-weight: 700;
  line-height: 44px;
}

/* Status bar */
.status {
  display: flex;
  flex: none;
  height: 22px;
  border-top: 1px solid #567db0;
  background: linear-gradient(#d8e6fb, #b9d1f5 35%, #b0cbf3 45%, #dce9fc);
  color: #1c3264;
  line-height: 20px;
}
.cellbox { padding: 0 9px; border-right: 1px solid #98b7e4; box-shadow: 1px 0 #eef5ff; white-space: nowrap; }
.cellbox.first { padding-left: 8px; }
.lang { display: flex; align-items: center; gap: 15px; padding-left: 7px; }
.right {
  display: flex;
  align-items: center;
  width: 286px;
  margin-left: auto;
  padding-left: 5px;
  border-left: 1px solid #6f94c8;
  background: linear-gradient(#b5cef4, #8db2e8 45%, #84abe4 50%, #a9c7f3);
}
.views { display: flex; height: 18px; border: 1px solid #7d9fd0; }
.views button { display: flex; align-items: center; justify-content: center; width: 18px; border-right: 1px solid #9dbbe6; background: linear-gradient(#cfe0fa, #a9c6f1); }
.views .on { background: linear-gradient(#fbd9a0, #f5b54e 50%, #ffea9c); }
.pct { flex: none; width: 49px; padding-left: 8px; font-size: 13px; }
.zoom { flex: 1; min-width: 0; height: 16px; margin: 0 12px 0 1px; appearance: none; background: linear-gradient(#58779f, #58779f) no-repeat center / 100% 1px; }
.zoom::-webkit-slider-thumb {
  appearance: none;
  width: 9px;
  height: 13px;
  border: 1px solid #3f5a86;
  border-radius: 1px 1px 5px 5px;
  background: #e8f0fb;
}

/* Taskbar */
.taskbar {
  display: flex;
  flex: none;
  height: 8px;
  padding: 1px 0 0 13px;
  overflow: hidden;
  background: linear-gradient(#0e1017 1px, #2b2e42 2px, #24273a);
}
.qq { margin-left: 30px; }
.fold { margin-left: 38px; margin-right: 31px; }
.taskbar button { width: 58px; height: 8px; margin-right: 4px; border: 1px solid #a9acb7; background: #6a6e7c; display: flex; justify-content: center; }
.taskbar .live { background: #b4b7c2; }
```
